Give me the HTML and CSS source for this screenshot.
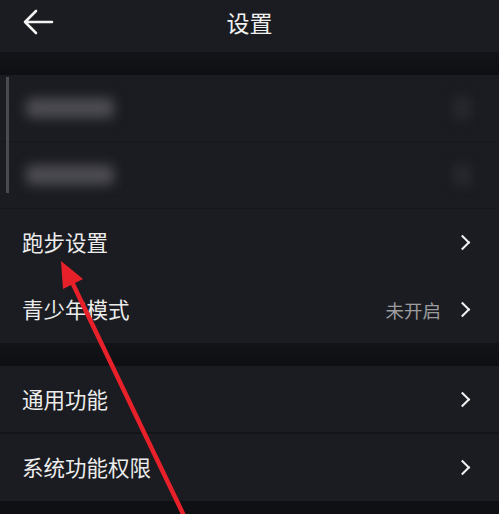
FILE: index.html
```html
<!DOCTYPE html>
<html lang="zh-CN">
<head>
  <meta charset="UTF-8" />
  <meta name="viewport" content="width=device-width, initial-scale=1.0"/>
  <title>设置</title>
  <link rel="stylesheet" href="styles.css">
</head>
<body>

  <div class="header">
    <svg class="back" width="32" height="26" viewBox="0 0 32 26">
      <path d="M14 2 L3 13 L14 24 M3 13 H30" fill="none" stroke="#f2f2f2" stroke-width="2.6" stroke-linecap="round" stroke-linejoin="round"/>
    </svg>
    <h1>设置</h1>
  </div>

  <div class="gap"></div>

  <!-- account (blurred) -->
  <div class="group account">
    <div class="thumb"></div>
    <div class="row blur-row">
      <span class="blob"></span>
      <span class="blob-right"></span>
    </div>
    <div class="row blur-row">
      <span class="blob"></span>
      <span class="blob-right"></span>
    </div>
  </div>

  <div class="group">
    <div class="row">
      <span class="label">跑步设置</span>
      <span class="chev"></span>
    </div>
    <div class="row">
      <span class="label">青少年模式</span>
      <span class="value">未开启</span>
      <span class="chev"></span>
    </div>
  </div>

  <div class="gap"></div>

  <div class="group">
    <div class="row line">
      <span class="label">通用功能</span>
      <span class="chev"></span>
    </div>
    <div class="row">
      <span class="label">系统功能权限</span>
      <span class="chev"></span>
    </div>
  </div>

  <!-- red annotation arrow -->
  <svg class="mark" width="499" height="514" viewBox="0 0 499 514">
    <line x1="72" y1="282" x2="186" y2="520" stroke="#e8202a" stroke-width="4.5"/>
    <polygon points="61,261 83,279 63,289" fill="#e8202a"/>
  </svg>

</body>
</html>
```

FILE: styles.css
```css
body {
  font-family: "Noto Sans CJK SC", "Noto Sans", sans-serif;
  background: #0f1014;
  color: #ececec;
  margin: 0;
  width: 499px;
  height: 514px;
  overflow: hidden;
  position: relative;
}

.header {
  height: 52px;
  background: #1b1c21;
  display: flex;
  align-items: center;
  justify-content: center;
  position: relative;
}

.back {
  position: absolute;
  left: 22px;
  top: 9px;
}

.header h1 {
  margin: 0 0 8px;
  font-size: 23px;
  font-weight: 400;
  color: #f0f0f0;
}

.gap {
  height: 23px;
  background: linear-gradient(#131418, #0e0f13);
}

.group {
  background: #1b1c21;
  position: relative;
}

.group + .group {
  border-top: 1px solid #17181c;
}

.row {
  height: 67px;
  display: flex;
  align-items: center;
  padding: 0 28px 0 22px;
}

.row.line {
  border-bottom: 2px solid #131418;
  height: 66px;
}

.label {
  font-size: 21.5px;
  flex: 1;
  padding-bottom: 2px;
}

.value {
  font-size: 18.5px;
  color: #9c9c9f;
  margin-right: 16px;
}

.chev {
  width: 9px;
  height: 9px;
  border-top: 2px solid #f2f2f2;
  border-right: 2px solid #f2f2f2;
  transform: rotate(45deg);
  margin-right: 3px;
}

.account .row {
  height: 66px;
}

.account .blur-row + .blur-row {
  border-top: 1px solid #16171b;
}

.thumb {
  position: absolute;
  left: 6px;
  top: 2px;
  width: 3px;
  height: 116px;
  background: #4a4a50;
  filter: blur(0.6px);
}

.blob {
  width: 88px;
  height: 20px;
  margin-left: 4px;
  background: #4c4c52;
  border-radius: 6px;
  filter: blur(6px);
}

.blob-right {
  margin-left: auto;
  width: 18px;
  height: 22px;
  background: #26272c;
  filter: blur(5px);
}

.mark {
  position: absolute;
  left: 0;
  top: 0;
}
```
